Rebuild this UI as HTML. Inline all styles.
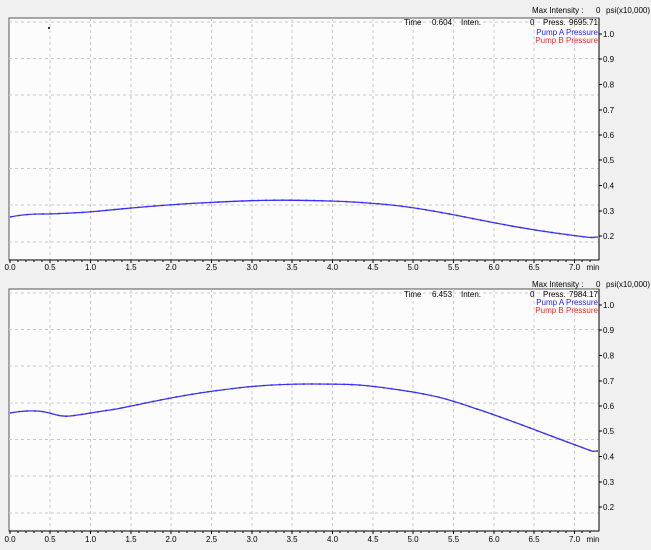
<!DOCTYPE html><html><head><style>body{margin:0;background:#f0f0f0;width:651px;height:545px;overflow:hidden;font-family:"Liberation Sans",sans-serif}</style></head><body>
<svg width="651" height="545" xmlns="http://www.w3.org/2000/svg" font-family="Liberation Sans, sans-serif" font-size="8">
<defs>
<g id="vg" stroke="#c8c8c8" stroke-dasharray="3,3" stroke-width="1">
<line x1="50" x2="50" y1="0" y2="242"/><line x1="90.5" x2="90.5" y1="0" y2="242"/><line x1="131" x2="131" y1="0" y2="242"/><line x1="171" x2="171" y1="0" y2="242"/><line x1="211.5" x2="211.5" y1="0" y2="242"/><line x1="252" x2="252" y1="0" y2="242"/><line x1="292" x2="292" y1="0" y2="242"/><line x1="332.5" x2="332.5" y1="0" y2="242"/><line x1="373" x2="373" y1="0" y2="242"/><line x1="413" x2="413" y1="0" y2="242"/><line x1="453.5" x2="453.5" y1="0" y2="242"/><line x1="494" x2="494" y1="0" y2="242"/><line x1="534" x2="534" y1="0" y2="242"/><line x1="574.5" x2="574.5" y1="0" y2="242"/>
<line x1="9" x2="599" y1="4" y2="4"/><line x1="9" x2="599" y1="40.5" y2="40.5"/><line x1="9" x2="599" y1="77" y2="77"/><line x1="9" x2="599" y1="114" y2="114"/><line x1="9" x2="599" y1="150.5" y2="150.5"/><line x1="9" x2="599" y1="187" y2="187"/><line x1="9" x2="599" y1="224" y2="224"/>
</g>
<g id="xt" stroke="#000" stroke-width="1">
<path d="M10,0v3M18,0v2M26,0v2M34,0v2M42,0v2M50,0v3M58,0v2M66,0v2M74,0v2M82,0v2M90.5,0v3M98,0v2M106,0v2M114,0v2M122,0v2M131,0v3M139,0v2M147,0v2M155,0v2M163,0v2M171,0v3M179,0v2M187,0v2M195,0v2M203,0v2M211.5,0v3M219,0v2M227,0v2M235,0v2M243,0v2M252,0v3M260,0v2M268,0v2M276,0v2M284,0v2M292,0v3M300,0v2M308,0v2M316,0v2M324,0v2M332.5,0v3M340,0v2M348,0v2M356,0v2M364,0v2M373,0v3M381,0v2M389,0v2M397,0v2M405,0v2M413,0v3M421,0v2M429,0v2M437,0v2M445,0v2M453.5,0v3M461,0v2M469,0v2M477,0v2M485,0v2M494,0v3M502,0v2M510,0v2M518,0v2M526,0v2M534,0v3M542,0v2M550,0v2M558,0v2M566,0v2M574.5,0v3M582,0v2M590,0v2"/>
</g>
<g id="xl" fill="#000" font-size="8" text-anchor="middle">
<text x="10" y="0">0.0</text><text x="50" y="0">0.5</text><text x="90.5" y="0">1.0</text><text x="131" y="0">1.5</text><text x="171" y="0">2.0</text><text x="211.5" y="0">2.5</text><text x="252" y="0">3.0</text><text x="292" y="0">3.5</text><text x="332.5" y="0">4.0</text><text x="373" y="0">4.5</text><text x="413" y="0">5.0</text><text x="453.5" y="0">5.5</text><text x="494" y="0">6.0</text><text x="534" y="0">6.5</text><text x="574.5" y="0">7.0</text><text x="593" y="0">min</text>
</g>
<g id="yl" font-size="8">
<text x="603" y="3">1.0</text><text x="603" y="28">0.9</text><text x="603" y="53.5">0.8</text><text x="603" y="79">0.7</text><text x="603" y="104">0.6</text><text x="603" y="129">0.5</text><text x="603" y="154.5">0.4</text><text x="603" y="180">0.3</text><text x="603" y="205">0.2</text>
<g stroke="#000"><line x1="599" x2="602" y1="0" y2="0"/><line x1="599" x2="602" y1="25" y2="25"/><line x1="599" x2="602" y1="50.5" y2="50.5"/><line x1="599" x2="602" y1="76" y2="76"/><line x1="599" x2="602" y1="101" y2="101"/><line x1="599" x2="602" y1="126" y2="126"/><line x1="599" x2="602" y1="151.5" y2="151.5"/><line x1="599" x2="602" y1="177" y2="177"/><line x1="599" x2="602" y1="202" y2="202"/></g>
</g>
</defs>
<rect x="9" y="18" width="590" height="242" fill="#fcfcfc" stroke="#555"/>
<use href="#vg" y="18"/>
<use href="#yl" y="34" x="0"/>
<line x1="599" y1="18" x2="599" y2="260" stroke="#000"/>
<line x1="9" y1="260" x2="599" y2="260" stroke="#000"/>
<use href="#xt" y="260"/>
<use href="#xl" y="270"/>
<rect x="48" y="27" width="2" height="2" fill="#333"/>
<text x="532" y="13">Max Intensity :</text><text x="596" y="13">0</text><text x="606" y="13">psi(x10,000)</text>
<text x="404" y="25">Time</text><text x="432" y="25">0.604</text><text x="461" y="25">Inten.</text><text x="530" y="25">0</text><text x="543" y="25">Press.</text><text x="569" y="25">9695.71</text>
<text x="598" y="35" fill="#2222ff" text-anchor="end">Pump A Pressure</text>
<text x="598" y="43" fill="#ff2222" text-anchor="end">Pump B Pressure</text>
<path d="M10,217 C20,215 30,214 40,214 S80,213 100,211 S160,205 200,203 S270,199 330,201 S420,208 470,218 S540,231 570,235 S590,237 598,237" fill="none" stroke="#e03030" stroke-width="1.6" stroke-dasharray="2,6"/>
<path d="M10,217 C20,215 30,214 40,214 S80,213 100,211 S160,205 200,203 S270,199 330,201 S420,208 470,218 S540,231 570,235 S590,237 598,237" fill="none" stroke="#3333ff" stroke-width="1.3"/>
<rect x="9" y="289" width="590" height="242" fill="#fcfcfc" stroke="#555"/>
<use href="#vg" y="289"/>
<use href="#yl" y="305"/>
<line x1="599" y1="289" x2="599" y2="531" stroke="#000"/>
<line x1="9" y1="531" x2="599" y2="531" stroke="#000"/>
<use href="#xt" y="531"/>
<use href="#xl" y="542"/>
<text x="532" y="287">Max Intensity :</text><text x="596" y="287">0</text><text x="606" y="287">psi(x10,000)</text>
<text x="404" y="297">Time</text><text x="432" y="297">6.453</text><text x="461" y="297">Inten.</text><text x="530" y="297">0</text><text x="543" y="297">Press.</text><text x="569" y="297">7984.17</text>
<text x="598" y="305" fill="#2222ff" text-anchor="end">Pump A Pressure</text>
<text x="598" y="313" fill="#ff2222" text-anchor="end">Pump B Pressure</text>
<path d="M10,413 C20,411 35,410 45,412 S60,417 70,416 S95,412 110,410 S160,399 200,393 S270,384 310,384 S360,384 400,390 S450,400 480,410 S540,432 570,443 S590,451 598,451" fill="none" stroke="#e03030" stroke-width="1.6" stroke-dasharray="2,6"/>
<path d="M10,413 C20,411 35,410 45,412 S60,417 70,416 S95,412 110,410 S160,399 200,393 S270,384 310,384 S360,384 400,390 S450,400 480,410 S540,432 570,443 S590,451 598,451" fill="none" stroke="#3333ff" stroke-width="1.3"/>
</svg>
</body></html>
